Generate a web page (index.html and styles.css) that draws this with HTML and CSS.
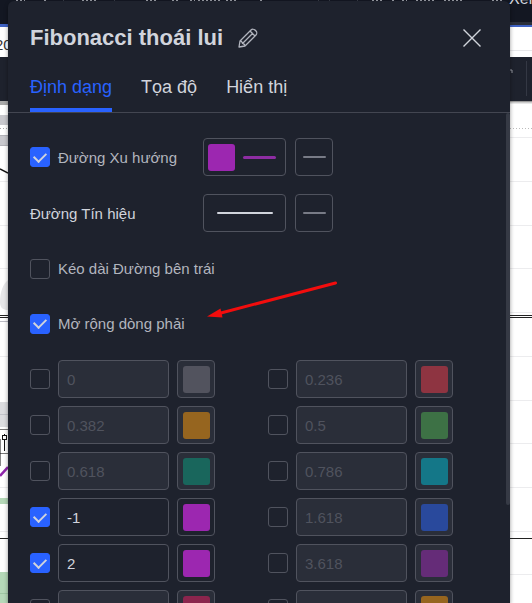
FILE: index.html
```html
<!DOCTYPE html>
<html lang="vi">
<head>
<meta charset="utf-8">
<meta name="viewport" content="width=device-width, initial-scale=1">
<title>Fibonacci thoái lui</title>
<link rel="stylesheet" href="styles.css">
</head>
<body>
<div class="chart" aria-hidden="true">
  <svg class="chart-left" width="8" height="603" viewBox="0 0 8 603">
    <rect width="8" height="603" fill="#fff"/>
    <rect width="8" height="25" fill="#131722"/>
    <rect y="24" width="8" height="3" fill="#3f62c4"/>
    <rect y="57" width="8" height="44" fill="#1e222d"/>
    <path d="M0 103h8" stroke="#aaa" stroke-width="4"/>
    <path d="M0 120h8M0 141h8" stroke="#c8c8cd" stroke-width="10"/>
    <path d="M0 128.500h8" stroke="#aaa" stroke-dasharray="1 2"/>
    <path d="M0 135.500h8M0 145.500h8" stroke="#b2b2b8"/>
    <path d="M0 150h8v25L0 170z" fill="#fff"/>
    <path d="M0 169l8 4" stroke="#111" stroke-width="1.500"/>
    <path d="M0 181.500h8M0 225.500h8M0 268.500h8M0 356.500h8M0 487.500h8M0 531.500h8" stroke="#ececee"/>
    <path d="M8 280C3 284 0 292 0 302c0 6 3 8 8 8z" fill="#e6e6e8"/>
    <path d="M0 315.500h8M0 317.500h8" stroke="#222"/>
    <path d="M0 321.500h8" stroke="#bbbbc4"/>
    <rect y="402" width="8" height="25" fill="#dcdde0"/>
    <path d="M0 414.500h8" stroke="#c2c4ca"/>
    <path d="M0 429.500h8M0 453.500h8" stroke="#777"/>
    <path d="M4.500 434v3M4.500 440v11M0 439v27" stroke="#111"/>
    <rect x="2.500" y="435.500" width="4" height="4" fill="#fff" stroke="#111"/>
    <path d="M0 476l8-9" stroke="#8e24aa" stroke-width="2.500"/>
    <rect y="498" width="8" height="6" fill="#b5d8b8"/>
    <path d="M0 538.500h8" stroke="#222"/>
    <rect y="572" width="8" height="31" fill="#b5d8b8"/>
    <path d="M0 593.500h8" stroke="#9fc6a3"/>
  </svg>
  <span class="axis-label">20</span>
  <svg class="toolbar-marks" width="490" height="2" viewBox="0 0 490 2">
    <path d="M2 .5h9M30 .5h4M68 .5h14M132 .5h10M158 .5h8M176 .5h5M184 .5h24M212 .5h12M246 .5h4M358 .5h10M378 .5h4M388 .5h5M402 .5h18M430 .5h20M478 .5h10" stroke="#9598a1" stroke-dasharray="2 2"/>
    <path d="M49.500 0v2M100.500 0v2M304.500 0v2M315.500 0v2M343.500 0v2" stroke="#363a45"/>
  </svg>
  <svg class="chart-right" width="22" height="603" viewBox="0 0 22 603">
    <rect width="22" height="603" fill="#fff"/>
    <rect width="22" height="22" fill="#131722"/>
    <rect y="22" width="22" height="3" fill="#2a2e39"/>
    <rect y="25" width="22" height="2" fill="#3f62c4"/>
    <path d="M0 50.500h22" stroke="#e8e8ea"/>
    <rect y="57" width="22" height="44" fill="#1e222d"/>
    <path d="M16.500 61v35" stroke="#343844"/>
    <path d="M0 70h2v3" fill="none" stroke="#9598a1"/>
    <path d="M0 101.500h22" stroke="#999"/>
    <path d="M0 102.500h22" stroke="#ccc"/>
    <path d="M0 103.500h22" stroke="#e8e8e8"/>
    <path d="M0 128.500h22" stroke="#bbb" stroke-dasharray="1 2"/>
    <path d="M0 137.500h22M0 181.500h22M0 225.500h22M0 268.500h22M0 312.500h22M0 356.500h22M0 400.500h22M0 443.500h22M0 487.500h22M0 531.500h22M0 574.500h22" stroke="#ececee"/>
    <path d="M0 315.500h22M0 317.500h22M0 538.500h22" stroke="#222"/>
  </svg>
  <span class="menu-label">Xem</span>
</div>

<main class="dialog">
  <header class="dialog-header">
    <h1 class="title">Fibonacci thoái lui</h1>
    <button class="icon-button" type="button" aria-label="Đổi tên">
      <svg width="20" height="20" viewBox="0 0 20 20" fill="none" stroke="#b2b5be" stroke-width="1.300" stroke-linejoin="round">
        <path d="M1 19l1-6L13 2c1-1 3-1 4.200.200L18 3c1 1 1 3 0 4L7 18z"/>
        <path d="M2 13c2 0 2 1 2.500 2.500C6 16 7 16 7 18M4.500 15.500L15 5M12 3l5 5"/>
      </svg>
    </button>
    <button class="icon-button close" type="button" aria-label="Đóng">
      <svg width="18" height="18" viewBox="0 0 18 18" stroke="#d1d4dc" stroke-width="1.400"><path d="M.5.5l17 17M17.500.5l-17 17"/></svg>
    </button>
  </header>

  <nav class="tabs">
    <a class="tab active" href="#style">Định dạng</a>
    <a class="tab" href="#coords">Tọa độ</a>
    <a class="tab" href="#visibility">Hiển thị</a>
  </nav>

  <form class="panel" id="style">
    <div class="option-row tall">
      <label class="option"><input class="check" type="checkbox" checked>Đường Xu hướng</label>
      <button class="line-button wide with-color" type="button" aria-label="Màu xu hướng"><span class="swatch purple"></span><span class="stroke trend"></span></button>
      <button class="line-button" type="button" aria-label="Kiểu nét xu hướng"><span class="stroke thin"></span></button>
    </div>
    <div class="option-row tall">
      <span class="option plain">Đường Tín hiệu</span>
      <button class="line-button wide" type="button" aria-label="Màu tín hiệu"><span class="stroke signal"></span></button>
      <button class="line-button" type="button" aria-label="Kiểu nét tín hiệu"><span class="stroke thin"></span></button>
    </div>
    <div class="option-row">
      <label class="option"><input class="check" type="checkbox">Kéo dài Đường bên trái</label>
    </div>
    <div class="option-row">
      <label class="option"><input class="check" type="checkbox" checked>Mở rộng dòng phải</label>
    </div>

    <div class="levels">
      <div class="level"><input class="check" type="checkbox" aria-label="Mức 0"><input class="value" type="text" value="0" aria-label="Giá trị" disabled><button class="color-button" type="button" aria-label="Màu" disabled><span class="swatch gray"></span></button></div>
      <div class="level"><input class="check" type="checkbox" aria-label="Mức 0.236"><input class="value" type="text" value="0.236" aria-label="Giá trị" disabled><button class="color-button" type="button" aria-label="Màu" disabled><span class="swatch red"></span></button></div>
      <div class="level"><input class="check" type="checkbox" aria-label="Mức 0.382"><input class="value" type="text" value="0.382" aria-label="Giá trị" disabled><button class="color-button" type="button" aria-label="Màu" disabled><span class="swatch orange"></span></button></div>
      <div class="level"><input class="check" type="checkbox" aria-label="Mức 0.5"><input class="value" type="text" value="0.5" aria-label="Giá trị" disabled><button class="color-button" type="button" aria-label="Màu" disabled><span class="swatch green"></span></button></div>
      <div class="level"><input class="check" type="checkbox" aria-label="Mức 0.618"><input class="value" type="text" value="0.618" aria-label="Giá trị" disabled><button class="color-button" type="button" aria-label="Màu" disabled><span class="swatch teal"></span></button></div>
      <div class="level"><input class="check" type="checkbox" aria-label="Mức 0.786"><input class="value" type="text" value="0.786" aria-label="Giá trị" disabled><button class="color-button" type="button" aria-label="Màu" disabled><span class="swatch cyan"></span></button></div>
      <div class="level"><input class="check" type="checkbox" aria-label="Mức -1" checked><input class="value" type="text" value="-1" aria-label="Giá trị"><button class="color-button" type="button" aria-label="Màu"><span class="swatch purple"></span></button></div>
      <div class="level"><input class="check" type="checkbox" aria-label="Mức 1.618"><input class="value" type="text" value="1.618" aria-label="Giá trị" disabled><button class="color-button" type="button" aria-label="Màu" disabled><span class="swatch blue"></span></button></div>
      <div class="level"><input class="check" type="checkbox" aria-label="Mức 2" checked><input class="value" type="text" value="2" aria-label="Giá trị"><button class="color-button" type="button" aria-label="Màu"><span class="swatch purple"></span></button></div>
      <div class="level"><input class="check" type="checkbox" aria-label="Mức 3.618"><input class="value" type="text" value="3.618" aria-label="Giá trị" disabled><button class="color-button" type="button" aria-label="Màu" disabled><span class="swatch violet"></span></button></div>
      <div class="level"><input class="check" type="checkbox" aria-label="Mức bổ sung"><input class="value" type="text" aria-label="Giá trị" disabled><button class="color-button" type="button" aria-label="Màu" disabled><span class="swatch crimson"></span></button></div>
      <div class="level"><input class="check" type="checkbox" aria-label="Mức bổ sung"><input class="value" type="text" aria-label="Giá trị" disabled><button class="color-button" type="button" aria-label="Màu" disabled><span class="swatch orange"></span></button></div>
    </div>
    <span class="scrollbar"></span>
    <svg class="pointer" width="130" height="38" viewBox="0 0 130 38" aria-hidden="true">
      <path d="M128.500 2L12 32.500" stroke="#f20d0d" stroke-width="3" stroke-linecap="round"/>
      <path d="M0 35.500L13.500 27.500l2 9z" fill="#f20d0d"/>
    </svg>
  </form>
</main>
</body>
</html>
```
FILE: styles.css
```css
* {
  box-sizing: border-box;
}

body {
  margin: 0;
  height: 100vh;
  overflow: hidden;
  position: relative;
  background: #fff;
  color: #d1d4dc;
  font-family: "Liberation Sans", Arial, sans-serif;
  font-size: 15px;
}

/* Chart visible around the dialog */
.chart {
  position: absolute;
  inset: 0;
  display: flex;
  justify-content: space-between;
  overflow: hidden;
  background: #131722;
}

.chart-left,
.chart-right {
  flex: none;
}

.axis-label {
  position: absolute;
  left: -5px;
  top: 36px;
  color: #333;
}

.menu-label {
  position: absolute;
  right: -10px;
  top: -10px;
  font-size: 16px;
}

.dialog {
  position: relative;
  display: flex;
  flex-direction: column;
  height: calc(100vh - 1px);
  margin: 1px 22px 0 8px;
  border-radius: 6px 6px 0 0;
  background: #1e222d;
  box-shadow: 0 2px 4px rgba(0, 0, 0, 0.4);
}

.dialog-header {
  display: flex;
  align-items: center;
  gap: 15px;
  padding: 20px 29px 0 22px;
  height: 54px;
}

.title {
  margin: 0;
  font-size: 22px;
  line-height: 32px;
}

.icon-button {
  display: flex;
  padding: 0;
  border: 0;
  background: none;
}

.close {
  margin-left: auto;
}

.tabs {
  display: flex;
  gap: 29px;
  padding: 0 22px;
  border-bottom: 1px solid #434651;
}

.tab {
  height: 57px;
  padding-top: 20px;
  border-bottom: 4px solid transparent;
  color: #d1d4dc;
  font-size: 18px;
  line-height: 24px;
  text-decoration: none;
}

.active {
  color: #2962ff;
  border-bottom-color: #2962ff;
}

.panel {
  position: relative;
  flex: 1;
  min-height: 0;
  margin: 0;
  padding: 16px 22px 0;
  overflow: hidden;
}

.option-row {
  display: flex;
  align-items: center;
  gap: 9px;
  height: 55px;
}

.tall {
  height: 56px;
}

.option {
  display: flex;
  align-items: center;
  gap: 8px;
  min-width: 164px;
  color: #b2b5be;
}

.plain {
  color: #d1d4dc;
}

.check {
  display: grid;
  place-items: center;
  flex: none;
  width: 20px;
  height: 20px;
  margin: 0;
  border: 1px solid #50535e;
  border-radius: 3px;
  appearance: none;
}

.check:checked {
  border-color: #2962ff;
  background: #2962ff;
}

.check:checked::before {
  content: "";
  width: 10px;
  height: 6px;
  margin-bottom: 3px;
  border: solid #d1d4dc;
  border-width: 0 0 2px 2px;
  transform: rotate(-45deg);
}

.line-button,
.color-button {
  display: flex;
  align-items: center;
  justify-content: center;
  flex: none;
  width: 38px;
  height: 38px;
  padding: 0;
  border: 1px solid #50535e;
  border-radius: 4px;
  background: none;
}

.wide {
  width: 83px;
  gap: 8px;
}

.with-color {
  justify-content: flex-start;
  padding-left: 4px;
}

.stroke {
  border-radius: 2px;
}

.trend {
  width: 33px;
  height: 3px;
  background: #8e2da3;
}

.signal {
  width: 56px;
  height: 2px;
  background: #d1d4dc;
}

.thin {
  width: 23px;
  height: 2px;
  background: #787b86;
}

.swatch {
  width: 27px;
  height: 27px;
  border-radius: 3px;
}

.levels {
  display: grid;
  grid-template-columns: max-content max-content;
  gap: 8px 53px;
  margin-top: 9px;
}

.level {
  display: flex;
  align-items: center;
  gap: 8px;
  height: 38px;
}

.value {
  width: 111px;
  height: 38px;
  padding: 0 8px;
  border: 1px solid #50535e;
  border-radius: 4px;
  background: none;
  color: #d1d4dc;
  font: inherit;
}

.value:disabled {
  color: #50535e;
}

.value:disabled,
.color-button:disabled {
  background: #2a2e39;
}

.purple { background: #9c27b0; }
.gray { background: #52535e; }
.red { background: #8e3441; }
.orange { background: #96651f; }
.green { background: #3d7145; }
.teal { background: #19665c; }
.cyan { background: #147788; }
.blue { background: #29499c; }
.violet { background: #652c78; }
.crimson { background: #8b254d; }

.scrollbar {
  position: absolute;
  top: 0;
  right: 0;
  width: 4px;
  height: 80%;
  border-radius: 2px;
  background: #363a45;
}

/* Annotation arrow over the right-extension option */
.pointer {
  position: absolute;
  left: 199px;
  top: 168px;
}
```
